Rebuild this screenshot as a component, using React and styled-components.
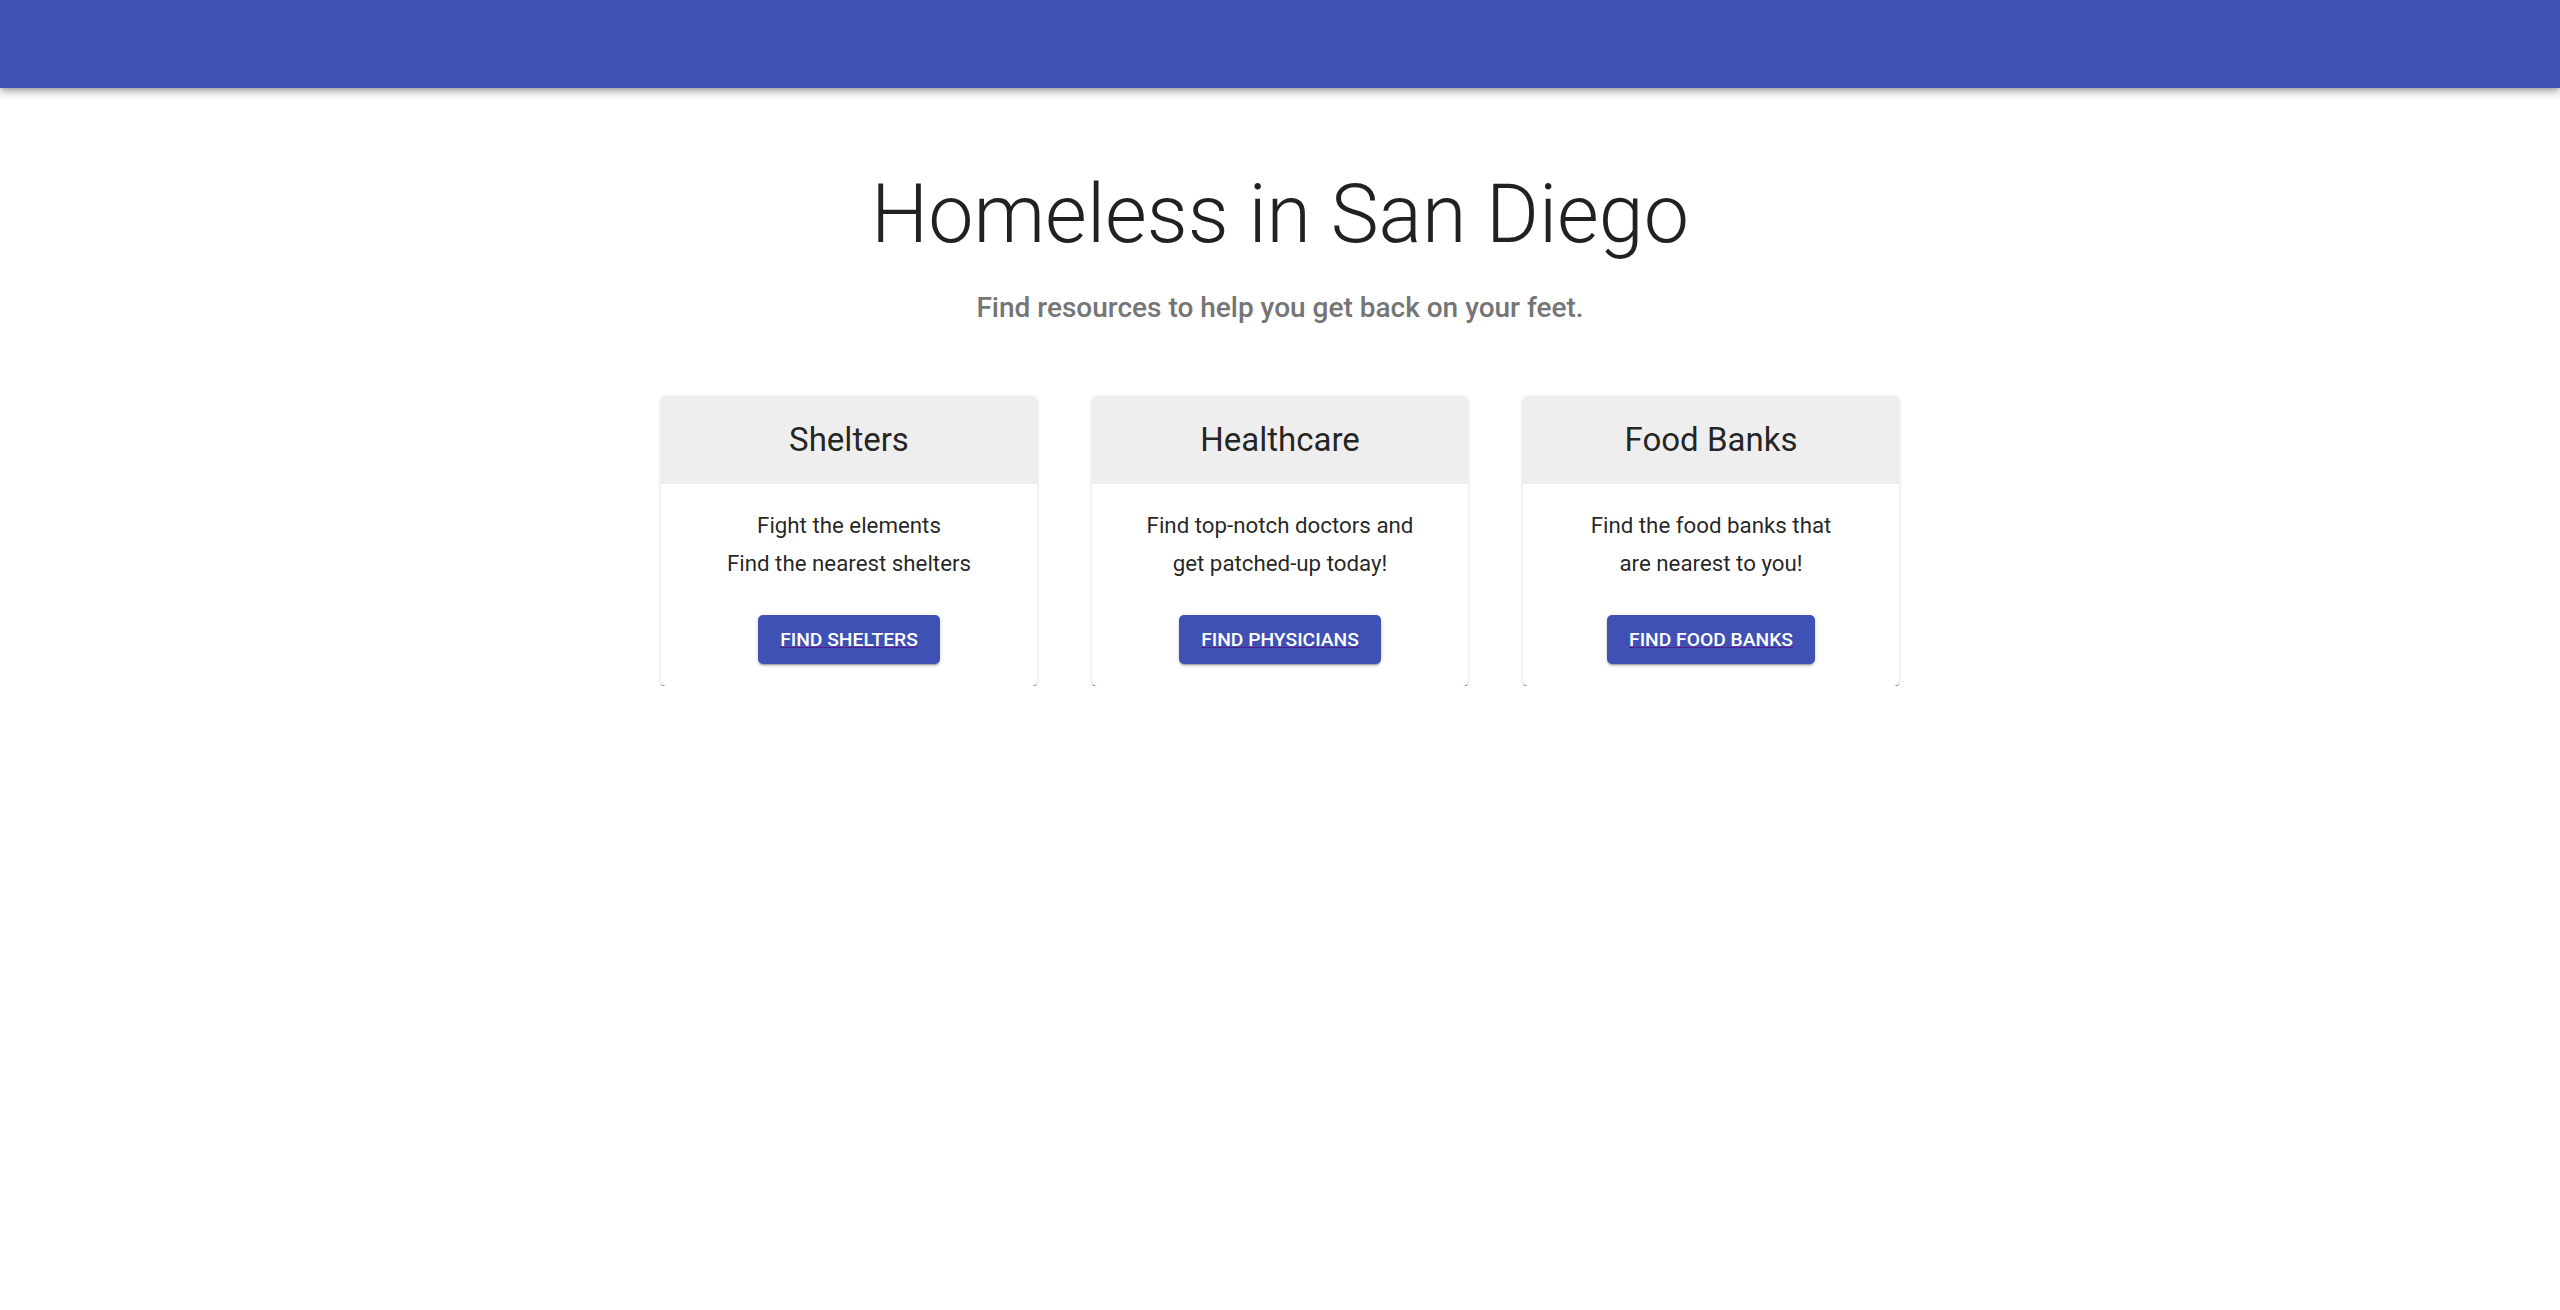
import styled, { createGlobalStyle } from 'styled-components';

const GlobalStyle = createGlobalStyle`
  body {
    margin: 0;
    background: #fff;
    font-family: Roboto, "Liberation Sans", sans-serif;
    color: rgba(0, 0, 0, 0.87);
  }
`;

const resources = [
  {
    title: 'Shelters',
    lines: ['Fight the elements', 'Find the nearest shelters'],
    action: 'Find Shelters',
  },
  {
    title: 'Healthcare',
    lines: ['Find top-notch doctors and', 'get patched-up today!'],
    action: 'Find Physicians',
  },
  {
    title: 'Food Banks',
    lines: ['Find the food banks that', 'are nearest to you!'],
    action: 'Find Food Banks',
  },
];

export default function App() {
  return (
    <>
      <GlobalStyle />
      <AppBar />
      <Main>
        <Title>Homeless in San Diego</Title>
        <Subtitle>Find resources to help you get back on your feet.</Subtitle>
        <CardRow>
          {resources.map((r) => (
            <Card key={r.title}>
              <CardHeader>{r.title}</CardHeader>
              <CardBody>
                <Text>
                  {r.lines[0]}
                  <br />
                  {r.lines[1]}
                </Text>
                <ActionLink href='#'>{r.action}</ActionLink>
              </CardBody>
            </Card>
          ))}
        </CardRow>
      </Main>
    </>
  );
}

const AppBar = styled.header`
  height: 88px;
  background-color: #3f51b5;
  box-shadow: 0px 3px 5px -1px rgba(0, 0, 0, 0.2),
    0px 5px 7px 0px rgba(0, 0, 0, 0.14), 0px 1px 14px 0px rgba(0, 0, 0, 0.12);
  position: relative;
  z-index: 1;
`;

const Main = styled.main`
  display: flex;
  flex-direction: column;
  align-items: center;
  padding-top: 79px;
`;

const Title = styled.h1`
  margin: 0;
  font-size: 80.8px;
  font-weight: 300;
  line-height: 1.2;
  color: rgba(0, 0, 0, 0.87);
`;

const Subtitle = styled.p`
  margin: 25px 0 0;
  font-size: 28px;
  line-height: 38px;
  font-weight: 500;
  color: #757575;
`;

const CardRow = styled.div`
  display: flex;
  gap: 55px;
  margin-top: 69px;
`;

const Card = styled.div`
  width: 376px;
  background: #fff;
  border-radius: 5px;
  overflow: hidden;
  box-shadow: 0px 3px 1px -1px rgba(0, 0, 0, 0.38),
    0px 1px 1px 0px rgba(0, 0, 0, 0.14), 0px 1px 4px 0px rgba(0, 0, 0, 0.14);
`;

const CardHeader = styled.div`
  height: 88px;
  display: flex;
  align-items: center;
  justify-content: center;
  background: #eeeeee;
  font-size: 33px;
  font-weight: 400;
  color: rgba(0, 0, 0, 0.87);
`;

const CardBody = styled.div`
  display: flex;
  flex-direction: column;
  align-items: center;
  padding: 22px;
`;

const Text = styled.p`
  margin: 0;
  font-size: 22.3px;
  line-height: 38px;
  text-align: center;
  color: rgba(0, 0, 0, 0.87);
`;

const ActionLink = styled.a`
  margin-top: 33px;
  display: inline-flex;
  align-items: center;
  justify-content: center;
  min-height: 49px;
  box-sizing: border-box;
  padding: 8px 22px;
  background-color: #3f51b5;
  border-radius: 5px;
  color: #fff;
  font-size: 19.25px;
  font-weight: 500;
  letter-spacing: 0;
  text-transform: uppercase;
  text-decoration: underline;
  text-decoration-color: #551a8b;
  box-shadow: 0px 3px 1px -2px rgba(0, 0, 0, 0.2),
    0px 2px 2px 0px rgba(0, 0, 0, 0.14), 0px 1px 5px 0px rgba(0, 0, 0, 0.12);
`;
